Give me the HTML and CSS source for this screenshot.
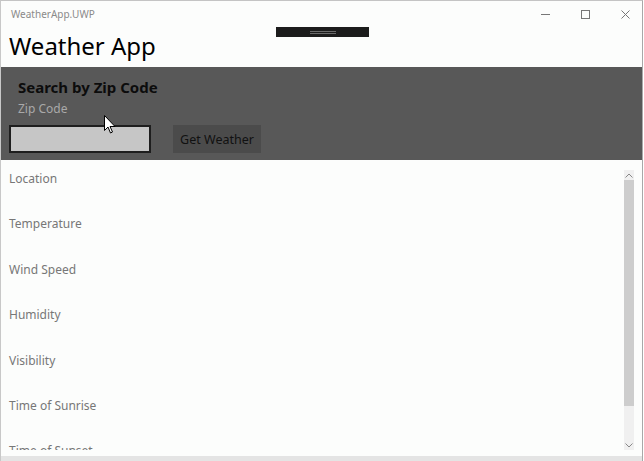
FILE: index.html
```html
<!DOCTYPE html>
<html>

<head lang="en">
  <meta charset="UTF-8">
  <title>WeatherApp.UWP</title>
  <link rel="stylesheet" href="styles.css">
</head>

<body>
  <div class="window">
    <div class="titlebar">
      <span class="app-name">WeatherApp.UWP</span>
      <div class="controls">
        <span class="ctl">
          <svg width="9" height="9" viewBox="0 0 9 9"><path d="M0 4.5h9" stroke="#777" stroke-width="1"/></svg>
        </span>
        <span class="ctl">
          <svg width="9" height="9" viewBox="0 0 9 9"><rect x="0.5" y="0.5" width="8" height="8" fill="none" stroke="#777" stroke-width="1"/></svg>
        </span>
        <span class="ctl">
          <svg width="9" height="9" viewBox="0 0 9 9"><path d="M0.5 0.5l8 8M8.5 0.5l-8 8" stroke="#777" stroke-width="1"/></svg>
        </span>
      </div>
    </div>

    <!-- barre du recorder -->
    <div class="grip"><span></span></div>

    <h1 class="app-title">Weather App</h1>

    <div class="search">
      <h2>Search by Zip Code</h2>
      <label for="zip">Zip Code</label>
      <div class="search-row">
        <input type="text" id="zip" class="zip-box">
        <button class="get-btn">Get Weather</button>
      </div>
      <svg class="cursor" width="12" height="19" viewBox="0 0 12 19">
        <path d="M0.5 0.5v15l3.5-3.5 2.5 6 2-1-2.5-5.5h5z" fill="#fff" stroke="#000" stroke-width="1"/>
      </svg>
    </div>

    <div class="results">
      <ul class="fields">
        <li>Location</li>
        <li>Temperature</li>
        <li>Wind Speed</li>
        <li>Humidity</li>
        <li>Visibility</li>
        <li>Time of Sunrise</li>
        <li>Time of Sunset</li>
      </ul>
      <div class="scrollbar">
        <span class="arr">
          <svg width="8" height="5" viewBox="0 0 8 5"><path d="M0.5 4.5l3.5-3.5 3.5 3.5" fill="none" stroke="#888" stroke-width="1"/></svg>
        </span>
        <div class="thumb"></div>
        <div class="track"></div>
        <span class="arr">
          <svg width="8" height="5" viewBox="0 0 8 5"><path d="M0.5 0.5l3.5 3.5 3.5-3.5" fill="none" stroke="#888" stroke-width="1"/></svg>
        </span>
      </div>
    </div>
    <div class="bottom"></div>
  </div>
</body>

</html>
```

FILE: styles.css
```css
* {
  margin: 0;
  padding: 0
}

ul {
  list-style: none
}

body {
  width: 644px;
  height: 461px;
  overflow: hidden;
  background: #fff;
  font-family: "Noto Sans", "Open Sans", sans-serif;
}

.window {
  position: relative;
  width: 641px;
  height: 460px;
  border-top: 1px solid #c4c4c4;
  border-left: 1px solid #c8c8c8;
  border-right: 1px solid #a8a8a8;
  background: #fcfdfc;
  display: flex;
  flex-direction: column;
}

.titlebar {
  height: 26px;
  display: flex;
  align-items: center;
  justify-content: space-between;
}

.app-name {
  font-size: 10px;
  color: #8a8a8a;
  padding-left: 10px;
}

.controls {
  display: flex;
  height: 100%;
  margin-right: -3px;
}

.ctl {
  width: 40px;
  display: flex;
  align-items: center;
  justify-content: center;
}

.grip {
  position: absolute;
  left: 275px;
  top: 26px;
  width: 93px;
  height: 10px;
  background: #1c1c1c;
  display: flex;
  align-items: center;
  justify-content: center;
}

.grip span {
  width: 26px;
  height: 3px;
  border-top: 1px solid #6a6a6a;
  border-bottom: 1px solid #6a6a6a;
  box-sizing: border-box;
}

.app-title {
  height: 40px;
  font-size: 24px;
  font-weight: normal;
  color: #000;
  padding-left: 8px;
  line-height: 38px;
}

.search {
  position: relative;
  height: 93px;
  background: #585858;
  padding: 11px 8px 0;
  box-sizing: border-box;
}

.search h2 {
  font-size: 15px;
  font-weight: bold;
  color: #0c0c0c;
  padding-left: 9px;
  line-height: 18px;
}

.search label {
  display: block;
  font-size: 12px;
  color: #a9a9a9;
  padding-left: 9px;
  margin-top: 5px;
  line-height: 16px;
}

.search-row {
  display: flex;
  gap: 22px;
  margin-top: 8px;
}

.zip-box {
  width: 142px;
  height: 28px;
  box-sizing: border-box;
  border: 2px solid #1e1e1e;
  background: #c6c6c6;
  outline: none;
}

.get-btn {
  width: 88px;
  height: 28px;
  border: 0;
  background: #4b4b4b;
  color: #111;
  font-family: inherit;
  font-size: 12.5px;
}

.cursor {
  position: absolute;
  left: 103px;
  top: 48px;
}

.results {
  flex: 1;
  display: flex;
  min-height: 0;
  overflow: hidden;
}

.fields {
  flex: 1;
  padding: 10px 0 0 8px;
  margin-bottom: 6px;
  overflow: hidden;
}

.fields li {
  height: 45.4px;
  font-size: 12px;
  color: #777;
  line-height: 18px;
}

.scrollbar {
  width: 10px;
  margin: 10px 8px 6px 0;
  background: #f0f0f0;
  display: flex;
  flex-direction: column;
}

.arr {
  height: 10px;
  display: flex;
  align-items: center;
  justify-content: center;
}

.thumb {
  height: 226px;
  background: #cdcdcd;
}

.track {
  flex: 1;
}

.bottom {
  height: 5px;
  background: #e4e4e4;
}
```
